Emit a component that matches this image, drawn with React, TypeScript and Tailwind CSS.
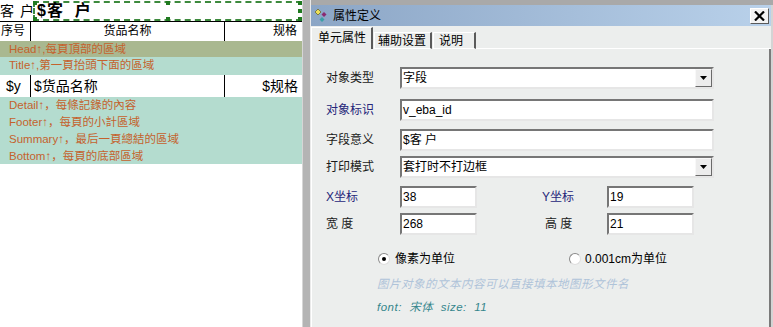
import React from 'react';

const bandText = 'text-[11.5px] leading-[17px] text-[#c4622d] pl-[9px] whitespace-nowrap';

function Handle({ className }: { className: string }) {
  return <div className={`absolute w-[4px] h-[4px] bg-[#1f7a1f] ${className}`} />;
}

function ReportDesigner() {
  return (
    <div className="w-[302px] h-full bg-white flex flex-col">
      <div className="h-[21px] flex items-center">
        <div className="w-[33px] text-[14px] leading-[20px] text-black whitespace-nowrap tracking-[1px]">客 户</div>
        <div className="relative flex-1 h-[20px] border-t-2 border-b-2 border-l-2 border-dashed border-[#3d8a3d] flex items-center pl-[2px]">
          <span className="text-[16px] font-bold text-black leading-[18px] whitespace-pre tracking-[1px]">$客  户</span>
          <Handle className="-left-[2px] -top-[2px]" />
          <Handle className="left-[131px] -top-[2px]" />
          <Handle className="right-0 -top-[2px]" />
          <Handle className="-left-[2px] -bottom-[2px]" />
          <Handle className="left-[131px] -bottom-[2px]" />
          <Handle className="right-0 -bottom-[2px]" />
          <Handle className="right-0 top-[6px]" />
        </div>
      </div>
      <div className="h-[20px] border-t border-black flex text-[12px] text-black">
        <div className="w-[31px] border-r border-black pl-[1px] leading-[19px]">序号</div>
        <div className="w-[194px] border-r border-black text-center leading-[19px]">货品名称</div>
        <div className="flex-1 text-right pr-[5px] leading-[19px]">规格</div>
      </div>
      <div className={`h-[16px] bg-[#a9b890] ${bandText} leading-[16px]`}>Head↑,每頁頂部的區域</div>
      <div className={`h-[18px] bg-[#b4dccf] ${bandText}`}>Title↑,第一頁抬頭下面的區域</div>
      <div className="h-[22px] flex text-[14px] text-black">
        <div className="w-[31px] border-r border-black pl-[6px] leading-[22px]">$y</div>
        <div className="w-[194px] border-r border-black pl-[3px] leading-[22px]">$货品名称</div>
        <div className="flex-1 text-right pr-[4px] leading-[22px]">$规格</div>
      </div>
      <div className="h-[67px] bg-[#b4dccf] flex flex-col">
        <div className={bandText}>Detail↑，每條記錄的內容</div>
        <div className={bandText}>Footer↑，每頁的小計區域</div>
        <div className={bandText}>Summary↑，最后一頁總結的區域</div>
        <div className={bandText}>Bottom↑，每頁的底部區域</div>
      </div>
    </div>
  );
}

function TextBox({ value, w }: { value: string; w: string }) {
  return (
    <div
      className={`${w} h-[22px] bg-white border-2 border-t-[#767676] border-l-[#767676] border-b-[#e6e6e6] border-r-[#e6e6e6] text-[12px] leading-[18px] pl-[1px] text-black whitespace-nowrap`}
    >
      {value}
    </div>
  );
}

function SelectBox({ value }: { value: string }) {
  return (
    <div className="w-[314px] h-[22px] bg-white border-2 border-t-[#767676] border-l-[#767676] border-b-[#e6e6e6] border-r-[#e6e6e6] flex items-center text-[12px] text-black">
      <div className="flex-1 pl-[1px] leading-[18px]">{value}</div>
      <div className="w-[17px] h-[18px] bg-[#ececec] border border-t-[#f8f8f8] border-l-[#f8f8f8] border-b-[#6a6a6a] border-r-[#6a6a6a] flex items-center justify-center">
        <svg width="7" height="4" viewBox="0 0 7 4">
          <path d="M0 0h7L3.5 4z" fill="#000" />
        </svg>
      </div>
    </div>
  );
}

function Row({ label, blue, children, mt }: { label: string; blue?: boolean; children: React.ReactNode; mt: string }) {
  return (
    <div className={`flex items-center ${mt}`}>
      <div className={`w-[74px] text-[12px] ${blue ? 'text-[#26267a]' : 'text-[#1a1a1a]'}`}>{label}</div>
      {children}
    </div>
  );
}

function Radio({ checked }: { checked?: boolean }) {
  return (
    <div className="w-[12px] h-[12px] rounded-full bg-white border border-t-[#8a8a8a] border-l-[#8a8a8a] border-b-[#dedede] border-r-[#dedede] flex items-center justify-center">
      {checked && <div className="w-[4px] h-[4px] rounded-full bg-black" />}
    </div>
  );
}

function TitleIcon() {
  return (
    <svg width="15" height="15" viewBox="0 0 15 15">
      <path d="M4 1l3 3-3 3-3-3z" fill="#ecdf5a" stroke="#6a6a30" strokeWidth="0.8" />
      <path d="M10 4l2.5 2.5L10 9 7.5 6.5z" fill="#8a2a72" />
      <path d="M8 9l2.5 2.5L8 14l-2.5-2.5z" fill="#3aa0a6" />
    </svg>
  );
}

function PropertyDialog() {
  return (
    <div className="flex-1 h-full bg-[#a9a9a9] pt-[5px] flex">
      <div className="w-[460px] h-full flex flex-col bg-[#eceeed]">
        <div className="h-[21px] flex items-center bg-gradient-to-r from-[#8ca6c6] to-[#b9d1ea] pl-[3px] pr-[2px]">
          <TitleIcon />
          <span className="ml-[4px] text-[12px] text-black">属性定义</span>
          <div className="ml-auto w-[19px] h-[16px] bg-[#f2f2f2] border border-t-[#ffffff] border-l-[#ffffff] border-b-[#5a5a5a] border-r-[#5a5a5a] flex items-center justify-center">
            <svg width="11" height="10" viewBox="0 0 11 10">
              <path d="M1 0.5l9 9M10 0.5l-9 9" stroke="#000" strokeWidth="2.2" />
            </svg>
          </div>
        </div>
        <div className="h-[22px] mt-[1px] flex items-end text-[12px] text-black">
          <div className="w-[62px] h-[22px] border-t border-l border-white border-r-2 border-r-[#5a5a5a] pl-[6px] leading-[20px] bg-[#eceeed]">单元属性</div>
          <div className="w-[58px] h-[17px] border-t border-l border-white border-r-2 border-r-[#5a5a5a] border-b border-b-white pl-[3px] leading-[16px] ml-[1px]">辅助设置</div>
          <div className="w-[43px] h-[17px] border-t border-l border-white border-r-2 border-r-[#5a5a5a] border-b border-b-white pl-[5px] leading-[16px] ml-[1px]">说明</div>
          <div className="flex-1 h-[1px] bg-white" />
        </div>
        <div className="flex-1 border-l border-white border-r-2 border-r-[#7a7a7a] pl-[14px] pt-[18px] flex flex-col">
          <Row label="对象类型" mt="mt-0">
            <SelectBox value="字段" />
          </Row>
          <Row label="对象标识" blue mt="mt-[10px]">
            <TextBox value="v_eba_id" w="w-[314px]" />
          </Row>
          <Row label="字段意义" mt="mt-[8px]">
            <TextBox value="$客 户" w="w-[314px]" />
          </Row>
          <Row label="打印模式" mt="mt-[5px]">
            <SelectBox value="套打时不打边框" />
          </Row>
          <div className="flex items-center mt-[8px]">
            <div className="w-[74px] text-[12px] text-[#26267a]">X坐标</div>
            <TextBox value="38" w="w-[77px]" />
            <div className="w-[65px] ml-[65px] text-[12px] text-[#26267a]">Y坐标</div>
            <TextBox value="19" w="w-[87px]" />
          </div>
          <div className="flex items-center mt-[5px]">
            <div className="w-[74px] text-[12px] text-[#1a1a1a]">宽 度</div>
            <TextBox value="268" w="w-[77px]" />
            <div className="w-[65px] ml-[65px] pl-[3px] text-[12px] text-[#1a1a1a]">高 度</div>
            <TextBox value="21" w="w-[87px]" />
          </div>
          <div className="flex items-center mt-[17px] h-[14px] text-[12px] text-black">
            <div className="ml-[52px]">
              <Radio checked />
            </div>
            <span className="ml-[5px]">像素为单位</span>
            <div className="ml-[114px]">
              <Radio />
            </div>
            <span className="ml-[4px]">0.001cm为单位</span>
          </div>
          <div className="ml-[51px] mt-[11px] text-[11.5px] italic text-[#afc3d9] leading-[14px] tracking-[0.5px]">
            图片对象的文本内容可以直接填本地图形文件名
          </div>
          <div className="ml-[51px] mt-[9px] text-[11.5px] italic text-[#35868c] leading-[14px] whitespace-pre tracking-[0.5px]">
            font:  宋体  size:  11
          </div>
        </div>
      </div>
      <div className="w-[2px] h-full bg-[#d4d4d4]" />
    </div>
  );
}

export default function App() {
  return (
    <div className="w-[773px] h-[327px] overflow-hidden flex bg-white font-['Liberation_Sans','Noto_Sans_CJK_SC',sans-serif]">
      <ReportDesigner />
      <div className="w-[9px] h-full flex">
        <div className="w-[1px] bg-[#d6d6d6]" />
        <div className="w-[7px] bg-[#b4b4b4]" />
        <div className="w-[1px] bg-[#eaeaea]" />
      </div>
      <PropertyDialog />
    </div>
  );
}
